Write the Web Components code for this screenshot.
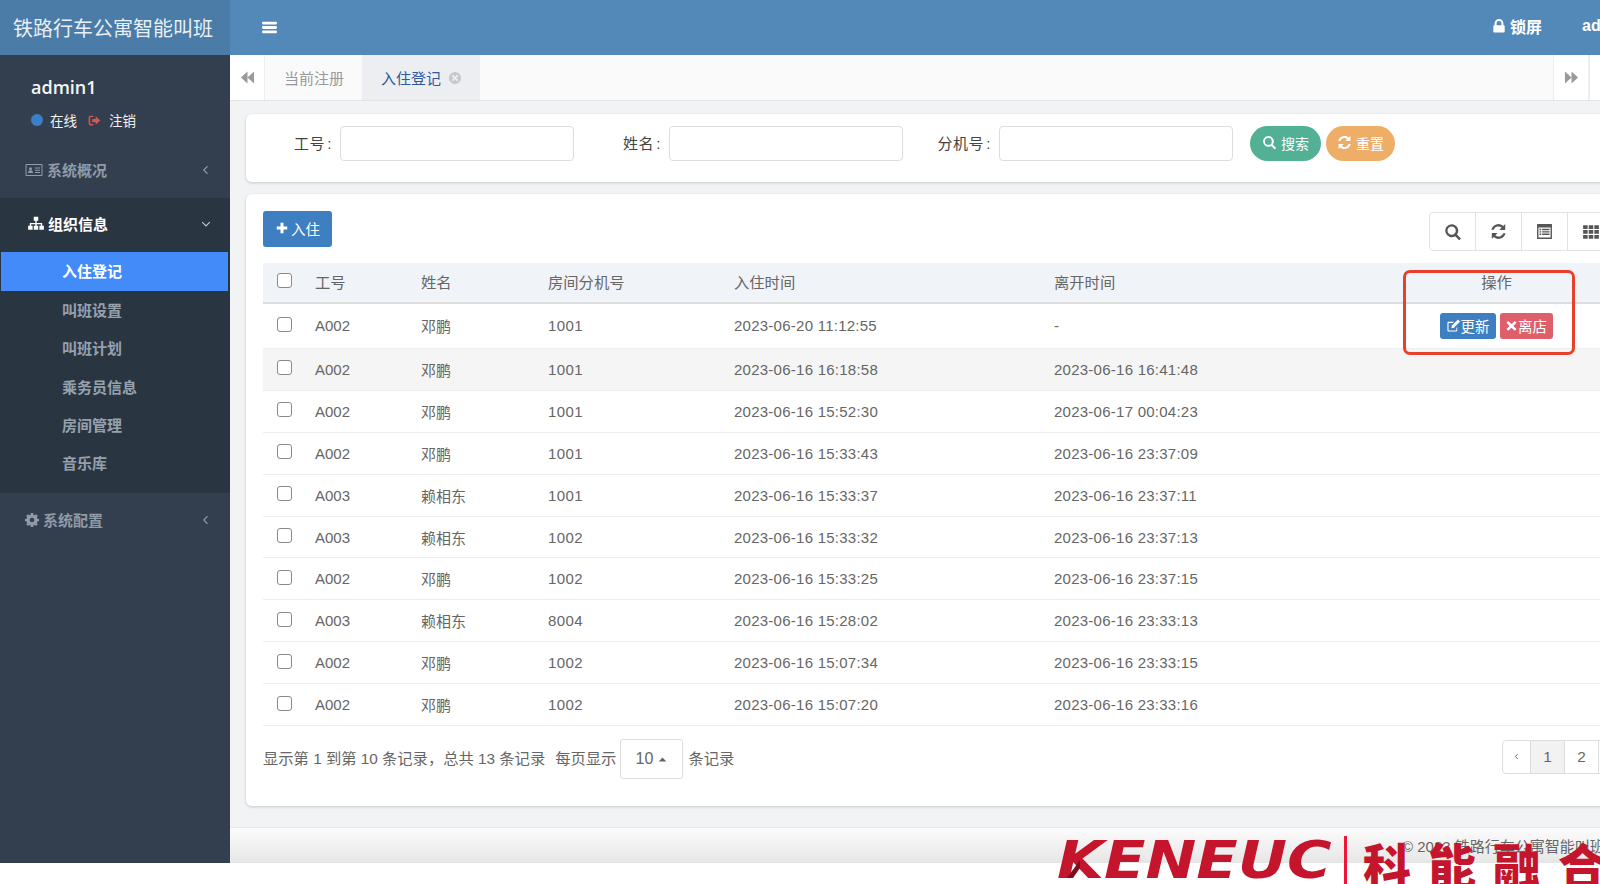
<!DOCTYPE html>
<html lang="zh-CN">
<head>
<meta charset="utf-8">
<title>铁路行车公寓智能叫班</title>
<style>
html,body{margin:0;padding:0;background:#fff;overflow:hidden;height:884px}
body{font:15px "Liberation Sans","Noto Sans CJK SC",sans-serif;color:#666}
</style>
</head>
<body>
<app-shell></app-shell>
<script>
const ICONS={
 bars:'<rect x="1" y="2.5" width="14" height="2.6" rx="1"/><rect x="1" y="6.7" width="14" height="2.6" rx="1"/><rect x="1" y="10.9" width="14" height="2.6" rx="1"/>',
 lock:'<path d="M3 7V5a5 5 0 0 1 10 0v2h.2c.7 0 1.3.6 1.3 1.3v5.900c0 .7-.6 1.300-1.300 1.300H2.800c-.7 0-1.300-.6-1.300-1.300V8.300C1.500 7.600 2.100 7 2.800 7zM5.200 7h5.600V5a2.800 2.800 0 0 0-5.600 0z"/>',
 back:'<path d="M8 1.500v13L1 8zM15 1.500v13L8 8z"/>',
 fwd:'<path d="M1 1.500v13L8 8zM8 1.500v13L15 8z"/>',
 xcircle:'<path fill-rule="evenodd" d="M8 1a7 7 0 1 1 0 14A7 7 0 0 1 8 1zM5.700 4.300 4.300 5.700 6.600 8l-2.300 2.300 1.400 1.400L8 9.400l2.300 2.300 1.400-1.400L9.400 8l2.300-2.300-1.400-1.400L8 6.600z"/>',
 idcard:'<path fill-rule="evenodd" d="M1.500 2h15c.6 0 1 .4 1 1v10c0 .6-.4 1-1 1h-15c-.6 0-1-.4-1-1V3c0-.6.4-1 1-1zm0 1v10h15V3z"/><circle cx="5.500" cy="6.700" r="1.500"/><path d="M3 11c0-1.800 1-2.800 2.500-2.800S8 9.200 8 11zM10 5.500h5v1h-5zM10 7.700h5v1h-5zM10 9.900h5v1h-5z"/>',
 sitemap:'<path d="M6 1.500h4v3.500H8.600v2h4.900v2.500h1.500V13h-4V9.500h1.300V8.300H8.600v1.200H10V13H6V9.500h1.400V8.300H3.700v1.200H5V13H1V9.500h1.500V7h4.900V5H6z"/>',
 gear:'<path fill-rule="evenodd" d="M6.700 1h2.600l.4 2 1.300.6 1.800-1.100 1.800 1.800-1.100 1.800.6 1.300 2 .4v2.600l-2 .4-.6 1.300 1.100 1.800-1.800 1.800-1.800-1.100-1.300.6-.4 2H6.700l-.4-2-1.300-.6-1.800 1.100-1.800-1.800 1.100-1.800-.6-1.300-2-.4V7.800l2-.4.6-1.300-1.100-1.800 1.800-1.800L5 3.600l1.300-.6zM8 6.400a2.600 2.600 0 1 0 0 5.200 2.600 2.600 0 0 0 0-5.200z" transform="translate(0 -1)"/>',
 signout:'<path d="M6.500 2H3C1.700 2 .8 3 .8 4.200v7.600C.8 13 1.700 14 3 14h3.500v-1.800H3.400c-.4 0-.7-.3-.7-.7V4.500c0-.4.300-.7.700-.7h3.100z"/><path d="M9.500 2.800 15.200 8l-5.700 5.200V10H5.200V6h4.300z"/>',
 search:'<path fill-rule="evenodd" d="M6.800 1a5.800 5.800 0 0 1 4.700 9.200l3.600 3.600-1.600 1.600-3.600-3.600A5.800 5.800 0 1 1 6.800 1zm0 2.100a3.700 3.700 0 1 0 0 7.400 3.700 3.700 0 0 0 0-7.400z"/>',
 refresh:'<path d="M14.300 1v5.500H8.800l2.100-2.100A4.600 4.600 0 0 0 3.500 6.300H1.300A6.800 6.800 0 0 1 12.500 2.800zM1.700 15V9.500h5.500l-2.100 2.100a4.600 4.600 0 0 0 7.400-1.900h2.200A6.800 6.800 0 0 1 3.500 13.200z"/>',
 plus:'<path d="M6.300 2h3.400v4.300H14v3.400H9.700V14H6.300V9.700H2V6.300h4.300z"/>',
 list:'<path fill-rule="evenodd" d="M1 1h14v14H1zm1.300 3.300v9.400h11.400V4.300z"/><path d="M3.300 5.500h1.600v1.300H3.300zM5.800 5.500h6.900v1.300H5.800zM3.300 7.700h1.600V9H3.300zM5.800 7.700h6.900V9H5.800zM3.300 9.900h1.600v1.300H3.300zM5.800 9.900h6.900v1.300H5.800z"/>',
 th:'<path d="M1 2h4v3.300H1zM6 2h4v3.300H6zM11 2h4v3.300h-4zM1 6.300h4v3.300H1zM6 6.300h4v3.300H6zM11 6.300h4v3.300h-4zM1 10.700h4V14H1zM6 10.700h4V14H6zM11 10.700h4V14h-4z"/>',
 edit:'<path d="M12 9.500V13c0 .8-.6 1.300-1.300 1.300H3c-.8 0-1.500-.5-1.500-1.300V5.300C1.500 4.500 2.200 4 3 4h5.500l-1.200 1.200H3.200c-.3 0-.5.200-.5.500v7c0 .3.200.5.500.5h7.400c.3 0 .5-.2.500-.5v-2.100z"/><path d="M12.800 1.600 15 3.800 8.500 10.300l-2.800.6.600-2.800z"/>',
 times:'<path d="M4 2.500 8 6.300l4-3.800 2.200 2.200L10.300 8.500l3.900 3.800-2.200 2.200L8 10.700l-4 3.800-2.200-2.200 3.900-3.800-3.900-3.800z"/>',
 left:'<path d="M10 3 5 8l5 5" fill="none" stroke="currentColor" stroke-width="1.500"/>',
 down:'<path d="M3 5.500l5 5 5-5" fill="none" stroke="currentColor" stroke-width="1.500"/>',
 caret:'<path d="M2.500 11 8 5l5.500 6z"/>',
 prev:'<path d="M10 4 6 8l4 4" fill="none" stroke="currentColor" stroke-width="1.700"/>'
};
class XIcon extends HTMLElement{
 connectedCallback(){
  const s=this.getAttribute('size')||16,n=this.getAttribute('name'),vb=n==='idcard'?'0 0 18 16':'0 0 16 16',w=n==='idcard'?s*18/16:s;
  this.attachShadow({mode:'open'}).innerHTML=`<style>:host{display:inline-flex;flex:none;line-height:0}svg{display:block;fill:currentColor}</style><svg width="${w}" height="${s}" viewBox="${vb}">${ICONS[n]}</svg>`;
 }
}
customElements.define('x-icon',XIcon);

class SideItem extends HTMLElement{
 connectedCallback(){
  this.attachShadow({mode:'open'}).innerHTML=`<style>
  :host{display:flex;align-items:center;height:38.3px;padding-left:62px;color:#97a1ad;font-weight:700;font-size:15px;box-sizing:border-box}
  :host([active]){color:#fff;background:#428bf9;margin:0 2px 0 1px;padding-left:61px;padding-bottom:2px;height:39px;margin-bottom:-.7px}
  </style><slot></slot>`;
 }
}
customElements.define('side-item',SideItem);

class SideGroup extends HTMLElement{
 connectedCallback(){
  const open=this.hasAttribute('open');
  this.attachShadow({mode:'open'}).innerHTML=`<style>
  :host{display:block}
  :host([open]){background:#2a3542;padding-bottom:11px}
  .h{display:flex;align-items:center;height:54px;box-sizing:border-box;padding:0 18px 0 25px;color:#909ba7;font-weight:700;gap:4px}
  :host([up]) .h{padding-bottom:3px}
  :host([open]) .h{color:#fff;padding-left:27px;gap:3px}
  .t{flex:1}
  .c{color:#8d98a4}
  :host([open]) .c{color:#c5ccd3}
  </style><div class="h"><x-icon name="${this.getAttribute('icon')}" size="${this.getAttribute('isize')||16}"></x-icon><span class="t">${this.getAttribute('label')}</span><x-icon class="c" name="${open?'down':'left'}" size="12"></x-icon></div><slot></slot>`;
 }
}
customElements.define('side-group',SideGroup);

class SideBar extends HTMLElement{
 connectedCallback(){
  this.attachShadow({mode:'open'}).innerHTML=`<style>
  :host{display:flex;flex-direction:column;width:230px;flex:none;background:#333f4f;color:#fff}
  .logo{height:55px;flex:none;background:#4a7ca7;color:#e8eff5;font-size:20px;display:flex;align-items:center;padding-left:13px;white-space:nowrap}
  .user{height:89px;box-sizing:border-box;padding:19px 0 0 31px;flex:none}
  .name{font:600 18px/26px "Open Sans","Noto Sans CJK SC",sans-serif;color:#f5f6f7}
  .st{display:flex;align-items:center;font-size:13.500px;margin-top:10px;height:20px;color:#f0f2f4}
  .dot{width:12px;height:12px;border-radius:50%;background:#3c7fc4;margin-right:7px}
  .so{color:#d9534f;margin:0 8px 0 11px}
  </style>
  <div class="logo">铁路行车公寓智能叫班</div>
  <div class="user"><div class="name">admin1</div><div class="st"><span class="dot"></span>在线<x-icon class="so" name="signout" size="13"></x-icon>注销</div></div>
  <side-group up label="系统概况" icon="idcard" isize="16"></side-group>
  <side-group up open label="组织信息" icon="sitemap" isize="18">
   <side-item active>入住登记</side-item><side-item>叫班设置</side-item><side-item>叫班计划</side-item><side-item>乘务员信息</side-item><side-item>房间管理</side-item><side-item>音乐库</side-item>
  </side-group>
  <side-group label="系统配置" icon="gear" isize="14"></side-group>`;
 }
}
customElements.define('side-bar',SideBar);

class TopBar extends HTMLElement{
 connectedCallback(){
  this.attachShadow({mode:'open'}).innerHTML=`<style>
  :host{display:flex;align-items:center;height:55px;flex:none;background:#5289b8;color:#fff;padding-left:31px;font-weight:700;font-size:16px;white-space:nowrap}
  .bars{margin-right:auto}
  .lock{margin-right:4px;margin-top:-3px}
  span{margin-top:-4px}
  .u{margin-left:40px;margin-right:-51px;width:69px}
  </style><x-icon class="bars" name="bars" size="17"></x-icon><x-icon class="lock" name="lock" size="14"></x-icon><span>锁屏</span><span class="u">admin1</span>`;
 }
}
customElements.define('top-bar',TopBar);

class TabStrip extends HTMLElement{
 connectedCallback(){
  this.attachShadow({mode:'open'}).innerHTML=`<style>
  :host{display:flex;height:46px;flex:none;box-sizing:border-box;background:#fafafa;border-bottom:1px solid #e4e4e4;font-size:15px;color:#999;white-space:nowrap}
  .b{width:34px;background:#fff;border-right:1px solid #eee;display:flex;align-items:center;justify-content:center;color:#9a9a9a;flex:none}
  .t{display:flex;align-items:center;flex:none;box-sizing:border-box;padding-left:19px;width:97px}
  .t.on{background:#eceef2;color:#2f5a9b;gap:7px;width:118px}
  .t.on x-icon{color:#c6c8cb}
  .sp{flex:1}
  .e{width:10px;background:#fff;border-left:1px solid #eee;flex:none}
  </style><div class="b"><x-icon name="back" size="15"></x-icon></div><div class="t">当前注册</div><div class="t on">入住登记<x-icon name="xcircle" size="14"></x-icon></div><div class="sp"></div><div class="b" style="border-left:1px solid #eee"><x-icon name="fwd" size="15"></x-icon></div><div class="e"></div>`;
 }
}
customElements.define('tab-strip',TabStrip);

class FormField extends HTMLElement{
 connectedCallback(){
  this.attachShadow({mode:'open'}).innerHTML=`<style>
  :host{display:flex;align-items:center;color:#444;width:${this.getAttribute('w')}px;justify-content:flex-end;flex:none}
  span{letter-spacing:.6px;margin-top:-3px}
  b{font-weight:400;margin-left:2px}
  .i{width:234px;height:35px;box-sizing:border-box;border:1px solid #ddd;border-radius:4px;background:#fff;margin:0;padding:0;margin-left:8px;outline:0;display:block}
  </style><span>${this.getAttribute('label')}<b>:</b></span><input class="i" type="text">`;
 }
}
customElements.define('form-field',FormField);

class PillBtn extends HTMLElement{
 connectedCallback(){
  this.attachShadow({mode:'open'}).innerHTML=`<style>
  :host{display:inline-flex;align-items:center;justify-content:center;gap:4px;height:35px;border-radius:18px;color:#fff;font-size:14px;box-sizing:border-box;flex:none;white-space:nowrap;padding-bottom:2px}
  </style><x-icon name="${this.getAttribute('icon')}" size="15"></x-icon><slot></slot>`;
 }
}
customElements.define('pill-btn',PillBtn);

class SearchPanel extends HTMLElement{
 connectedCallback(){
  this.attachShadow({mode:'open'}).innerHTML=`<style>
  :host{display:flex;height:68px;box-sizing:border-box;background:#fff;border-radius:6px;box-shadow:0 1px 3px rgba(0,0,0,.18);padding:12px 0 0 0;align-items:flex-start;flex:none}
  pill-btn.s{background:#52b095;width:71px;margin-left:17px}
  pill-btn.r{background:#eeae67;width:69px;margin-left:5px}
  </style>
  <form-field w="328" label="工号"></form-field><form-field w="329" label="姓名"></form-field><form-field w="330" label="分机号"></form-field>
  <pill-btn class="s" icon="search">搜索</pill-btn><pill-btn class="r" icon="refresh">重置</pill-btn>`;
 }
}
customElements.define('search-panel',SearchPanel);

class CheckBox extends HTMLElement{
 connectedCallback(){
  this.attachShadow({mode:'open'}).innerHTML=`<style>
  :host{display:block;width:15px;height:15px;box-sizing:border-box;border:1.500px solid #8a8a8a;border-radius:3px;background:#fff;margin:-3px 0 0 14px}
  </style>`;
 }
}
customElements.define('check-box',CheckBox);

const COLS='52px 106px 127px 186px 320px 326px 233px';
class TableHead extends HTMLElement{
 connectedCallback(){
  this.attachShadow({mode:'open'}).innerHTML=`<style>
  :host{display:grid;grid-template-columns:${COLS};align-items:center;height:41px;box-sizing:border-box;background:#f0f3f7;border-bottom:2px solid #ddd;color:#666;font-size:15.300px;padding-bottom:3px}
  .c{text-align:center}
  check-box{margin-top:-1px}
  </style><check-box></check-box><span>工号</span><span>姓名</span><span>房间分机号</span><span>入住时间</span><span>离开时间</span><span class="c">操作</span>`;
 }
}
customElements.define('table-head',TableHead);

class TableRow extends HTMLElement{
 connectedCallback(){
  const a=k=>this.getAttribute(k);
  const act=this.hasAttribute('actions')?`<div class="a"><button class="u"><x-icon name="edit" size="15"></x-icon>更新</button><button class="d"><x-icon name="times" size="13"></x-icon>离店</button></div>`:'<span></span>';
  this.attachShadow({mode:'open'}).innerHTML=`<style>
  :host{display:grid;grid-template-columns:${COLS};align-items:center;height:41.900px;box-sizing:border-box;border-bottom:1px solid #eee;color:#666}
  :host([actions]){height:45px;padding-bottom:1px}
  :host([shade]){background:#f5f5f5}
  .a{display:flex;justify-content:center;gap:4px;margin-left:-1px}
  .r{letter-spacing:.4px}.d8{letter-spacing:.25px}
  button{display:flex;align-items:center;justify-content:center;gap:0;height:26px;border:0;border-radius:3px;color:#fff;font:14.500px "Liberation Sans","Noto Sans CJK SC",sans-serif;padding:0}
  .u{background:#3d7fc1;width:56px}.d{background:#de5e6a;width:53px}
  </style><check-box></check-box><span>${a('no')}</span><span>${a('name')}</span><span class="r">${a('room')}</span><span class="d8">${a('in')}</span><span class="d8">${a('out')}</span>${act}`;
 }
}
customElements.define('table-row',TableRow);

class ToolGroup extends HTMLElement{
 connectedCallback(){
  this.attachShadow({mode:'open'}).innerHTML=`<style>
  :host{display:flex;height:39px;box-sizing:border-box;border:1px solid #e2e2e2;border-radius:4px;color:#555;margin:1px -1px 0 0}
  div{width:45px;display:flex;align-items:center;justify-content:center;border-right:1px solid #e2e2e2}
  div:last-child{border-right:0}
  </style><div><x-icon name="search" size="18"></x-icon></div><div><x-icon name="refresh" size="17"></x-icon></div><div><x-icon name="list" size="17"></x-icon></div><div><x-icon name="th" size="18"></x-icon></div>`;
 }
}
customElements.define('tool-group',ToolGroup);

class PageSize extends HTMLElement{
 connectedCallback(){
  this.attachShadow({mode:'open'}).innerHTML=`<style>
  :host{display:inline-flex;align-items:center;justify-content:center;gap:4px;width:63px;height:40px;box-sizing:border-box;border:1px solid #ddd;border-radius:3px;margin:0 5px 0 4px;font-size:16px;background:#fff;flex:none}
  </style>10<x-icon name="caret" size="11"></x-icon>`;
 }
}
customElements.define('page-size',PageSize);

class PageNav extends HTMLElement{
 connectedCallback(){
  this.attachShadow({mode:'open'}).innerHTML=`<style>
  :host{display:flex;height:34px;box-sizing:border-box;border:1px solid #ddd;border-radius:4px;margin-left:auto;margin-right:-15px;background:#fff;flex:none;margin-top:-5px}
  div{display:flex;align-items:center;justify-content:center;width:33px;border-right:1px solid #ddd}
  .p{width:27px;color:#555}.on{background:#f2f2f2}
  </style><div class="p"><x-icon name="prev" size="9"></x-icon></div><div class="on">1</div><div>2</div><div class="p">›</div>`;
 }
}
customElements.define('page-nav',PageNav);

const ROWS=[['A002','邓鹏','1001','2023-06-20 11:12:55','-'],['A002','邓鹏','1001','2023-06-16 16:18:58','2023-06-16 16:41:48'],['A002','邓鹏','1001','2023-06-16 15:52:30','2023-06-17 00:04:23'],['A002','邓鹏','1001','2023-06-16 15:33:43','2023-06-16 23:37:09'],['A003','赖相东','1001','2023-06-16 15:33:37','2023-06-16 23:37:11'],['A003','赖相东','1002','2023-06-16 15:33:32','2023-06-16 23:37:13'],['A002','邓鹏','1002','2023-06-16 15:33:25','2023-06-16 23:37:15'],['A003','赖相东','8004','2023-06-16 15:28:02','2023-06-16 23:33:13'],['A002','邓鹏','1002','2023-06-16 15:07:34','2023-06-16 23:33:15'],['A002','邓鹏','1002','2023-06-16 15:07:20','2023-06-16 23:33:16']];
class DataPanel extends HTMLElement{
 connectedCallback(){
  const rows=ROWS.map((r,i)=>`<table-row no="${r[0]}" name="${r[1]}" room="${r[2]}" in="${r[3]}" out="${r[4]}"${i==0?' actions':''}${i==1?' shade':''}></table-row>`).join('');
  this.attachShadow({mode:'open'}).innerHTML=`<style>
  :host{display:block;height:612px;box-sizing:border-box;margin-top:12px;background:#fff;border-radius:6px;box-shadow:0 1px 3px rgba(0,0,0,.18);padding:17px;flex:none}
  .tb{display:flex;justify-content:space-between;align-items:flex-start;height:52px}
  .add{display:flex;align-items:center;justify-content:center;gap:2px;width:69px;height:36px;background:#3d7fc1;border-radius:3px;color:#fff;box-sizing:border-box;font-size:14.500px;padding-bottom:2px}
  .ft{display:flex;align-items:center;margin-top:13px;height:40px;white-space:nowrap;font-size:15.300px}
  .ft>span{margin-top:-4px}
  </style>
  <div class="tb"><div class="add"><x-icon name="plus" size="14"></x-icon>入住</div><tool-group></tool-group></div>
  <table-head></table-head>${rows}
  <div class="ft"><span>显示第 1 到第 10 条记录，总共 13 条记录</span><span style="margin-left:10px">每页显示</span><page-size></page-size><span>条记录</span><page-nav></page-nav></div>`;
 }
}
customElements.define('data-panel',DataPanel);

class WaterMark extends HTMLElement{
 connectedCallback(){
  this.attachShadow({mode:'open'}).innerHTML=`<style>
  :host{position:absolute;left:1057px;top:836px;width:560px;height:48px;overflow:hidden;color:#c4152c;display:block}
  .k{position:absolute;left:0;top:-9px;font:italic 700 51px/68px "DejaVu Sans",sans-serif;transform:scaleX(1.190);transform-origin:0 0;white-space:nowrap}
  .l{position:absolute;left:287px;top:0;width:3px;height:48px;background:#ee1539}
  .z{position:absolute;left:306px;top:-4px;font:900 48px/62px "Noto Sans CJK SC",sans-serif;letter-spacing:17px;white-space:nowrap}
  .m{position:absolute;left:10px;top:24px}
  </style><span class="k">KENEUC</span><span class="l"></span><span class="z">科能融合</span><svg class="m" width="13" height="18" viewBox="0 0 13 18"><path d="M0 18 13 0v8L6 18z" fill="#7d1020"/></svg>`;
 }
}
customElements.define('water-mark',WaterMark);

class RedMark extends HTMLElement{
 connectedCallback(){
  this.attachShadow({mode:'open'}).innerHTML=`<style>
  :host{position:absolute;left:1403px;top:270px;width:172px;height:85px;box-sizing:border-box;border:3px solid #e8402a;border-radius:7px;display:block}
  </style>`;
 }
}
customElements.define('red-mark',RedMark);

class AppShell extends HTMLElement{
 connectedCallback(){
  this.attachShadow({mode:'open'}).innerHTML=`<style>
  :host{display:flex;width:1600px;height:863px;overflow:hidden;font:15px "Liberation Sans","Noto Sans CJK SC",sans-serif;color:#666}
  main{flex:1;min-width:0;display:flex;flex-direction:column;overflow:hidden;background:#f2f3f4;box-sizing:border-box}
  .content{flex:1;min-height:0;width:1384px;padding:13px 0 0 16px;display:flex;flex-direction:column}
  footer{height:36px;flex:none;box-sizing:border-box;border-top:1px solid #e6e6e6;background:linear-gradient(#fcfcfc,#e6e6e6);display:flex;align-items:center;padding-left:1172px;white-space:nowrap;color:#666;font-size:15px}
  </style>
  <side-bar></side-bar>
  <main><top-bar></top-bar><tab-strip></tab-strip>
   <div class="content"><search-panel></search-panel><data-panel></data-panel></div>
   <footer>© 2023 铁路行车公寓智能叫班</footer>
  </main>
  <red-mark></red-mark>
  <water-mark></water-mark>`;
 }
}
customElements.define('app-shell',AppShell);
</script>
</body>
</html>
